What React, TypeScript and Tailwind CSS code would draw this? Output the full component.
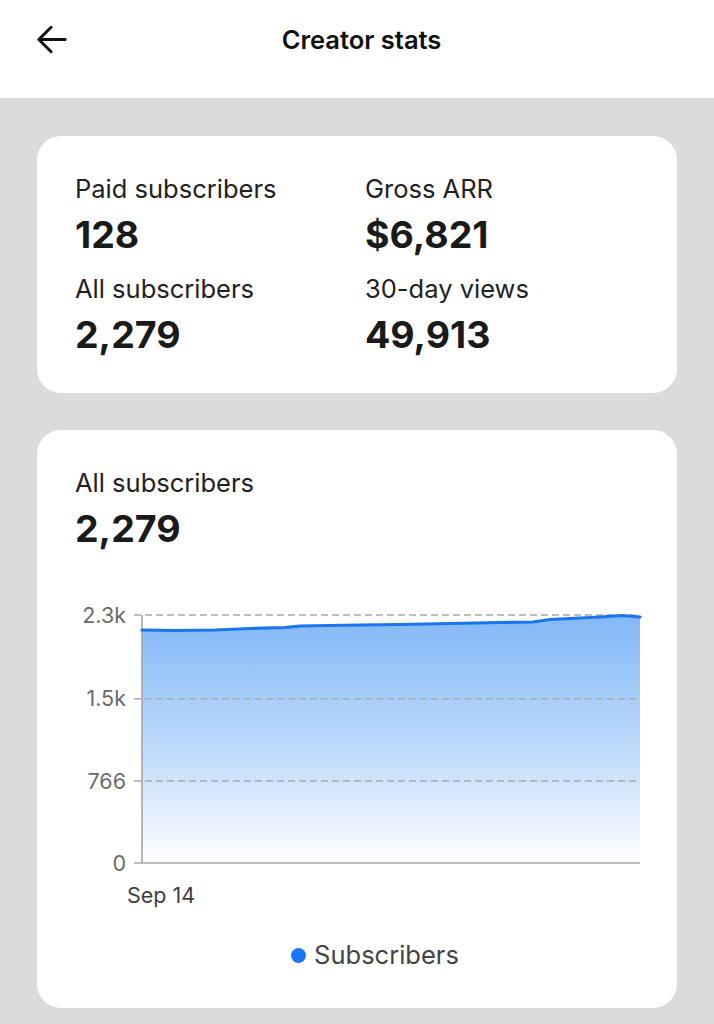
import React from "react";

const pts: [number, number][] = [
  [142, 630],
  [175, 630.5],
  [215, 630],
  [250, 628.5],
  [285, 627.5],
  [300, 626],
  [360, 625],
  [400, 624.5],
  [450, 623.5],
  [500, 622.5],
  [533, 622],
  [550, 619.5],
  [600, 617],
  [622, 615.5],
  [640, 617],
];

function Chart() {
  const ox = 37;
  const oy = 595;
  const p = pts.map(([x, y]) => [x - ox, y - oy] as [number, number]);
  const line = p.map(([x, y], i) => `${i === 0 ? "M" : "L"}${x} ${y}`).join(" ");
  const area = `${line} L${640 - ox} ${863 - oy} L${142 - ox} ${863 - oy} Z`;
  const grid = [615, 698.7, 781];
  const labels: [string, number][] = [
    ["2.3k", 615],
    ["1.5k", 698.7],
    ["766", 781],
    ["0", 863],
  ];
  return (
    <svg width={640} height={317} viewBox="0 0 640 317" className="block">
      <defs>
        <linearGradient id="fillg" x1="0" y1={615 - oy} x2="0" y2={863 - oy} gradientUnits="userSpaceOnUse">
          <stop offset="0" stopColor="#82b8f8" />
          <stop offset="0.55" stopColor="#bfdbfb" />
          <stop offset="1" stopColor="#ffffff" />
        </linearGradient>
      </defs>
      <path d={area} fill="url(#fillg)" />
      {grid.map((y) => (
        <line
          key={y}
          x1={134 - ox}
          x2={640 - ox}
          y1={y - oy}
          y2={y - oy}
          stroke="#a9a9a9"
          strokeWidth={1.5}
          strokeDasharray="7 4"
        />
      ))}
      <line x1={134 - ox} x2={640 - ox} y1={863 - oy} y2={863 - oy} stroke="#a9a9a9" strokeWidth={1.5} />
      <line x1={142 - ox} x2={142 - ox} y1={615 - oy} y2={863 - oy} stroke="#a0a0a0" strokeWidth={1.5} />
      <path d={line} fill="none" stroke="#1a76ee" strokeWidth={3.2} strokeLinejoin="round" strokeLinecap="round" />
      {labels.map(([t, y]) => (
        <text
          key={t}
          x={126 - ox}
          y={y - oy + 7.5}
          textAnchor="end"
          fontFamily="Inter, 'Noto Sans', sans-serif"
          fontSize={21.5}
          fill="#6a6a6a"
        >
          {t}
        </text>
      ))}
      <text
        x={127 - ox}
        y={895 - oy + 7.5}
        fontFamily="Inter, 'Noto Sans', sans-serif"
        fontSize={21.5}
        fill="#3f3f3f"
      >
        Sep 14
      </text>
    </svg>
  );
}

function Stat({ label, value }: { label: string; value: string }) {
  return (
    <div className="flex flex-col">
      <div className="text-[25.5px] leading-[44px] text-[#222]">{label}</div>
      <div className="text-[37.5px] leading-[48px] font-bold text-[#1a1a1a]">{value}</div>
    </div>
  );
}

export default function App() {
  return (
    <div className="w-[714px] min-h-[1024px] bg-[#dbdbdb]" style={{ fontFamily: "Inter, 'Noto Sans', sans-serif" }}>
      <header className="relative h-[98px] bg-white flex items-start justify-center">
        <button className="absolute left-[36px] top-[24px] w-[32px] h-[32px] flex items-center justify-center">
          <svg width="34" height="32" viewBox="0 0 34 32" fill="none">
            <path d="M3 15.5 H31 M16 2.5 L3 15.5 L16 28.5" stroke="#111" strokeWidth="3.2" strokeLinecap="round" strokeLinejoin="round" />
          </svg>
        </button>
        <h1 className="mt-[23px] pl-[9px] text-[25.5px] leading-[34px] font-semibold text-[#111]">Creator stats</h1>
      </header>
      <main className="px-[37px] pt-[38px] pb-[17px] flex flex-col gap-[37px]">
        <section className="bg-white rounded-[24px] px-[38px] pt-[31px] pb-[34px]">
          <div className="grid grid-cols-[290px_1fr] gap-y-[8px]">
            <Stat label="Paid subscribers" value="128" />
            <Stat label="Gross ARR" value="$6,821" />
            <Stat label="All subscribers" value="2,279" />
            <Stat label="30-day views" value="49,913" />
          </div>
        </section>
        <section className="bg-white rounded-[24px] pt-[31px] pb-[37px]">
          <div className="px-[38px]">
            <Stat label="All subscribers" value="2,279" />
          </div>
          <div className="mt-[42px]">
            <Chart />
          </div>
          <div className="mt-[27px] flex items-center justify-center gap-[8px] pl-[36px]">
            <span className="w-[15px] h-[15px] rounded-full bg-[#1877f2]" />
            <span className="text-[25.5px] leading-[32px] text-[#444]">Subscribers</span>
          </div>
        </section>
      </main>
    </div>
  );
}
